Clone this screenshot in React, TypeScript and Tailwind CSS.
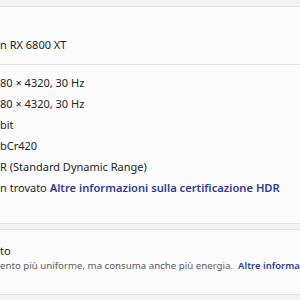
import React from "react";

// Pagina "Display avanzato" — ritaglio delle informazioni sullo schermo.
//   Solo la porzione visibile dei testi: le etichette a sinistra restano fuori inquadratura.
const rows = [
  "80 × 4320, 30 Hz",
  "80 × 4320, 30 Hz",
  "bit",
  "bCr420",
  "R (Standard Dynamic Range)",
];

export default function App() {
  return (
    <div className="h-[300px] w-[300px] overflow-hidden bg-[#f3f3f3] pt-[6px] font-['Noto_Sans',sans-serif] text-[#1b1b1b]">
      <div className="border-y border-[#e3e3e3] bg-[#fbfbfb]">
        <div className="flex h-[57px] items-end pb-[11px]">
          <p className="whitespace-nowrap text-[11px] leading-[16px] text-[#1b1b1b]">n RX 6800 XT</p>
        </div>
        <div className="border-t border-[#e3e3e3] pb-[25px] pt-[7px]">
          <div className="flex flex-col text-[11px] text-[#262626]">
            {rows.map((r, i) => (
              <p key={i} className="whitespace-nowrap leading-[21px]">
                {r}
              </p>
            ))}
            <p className="whitespace-nowrap leading-[21px]">
              n trovato{" "}
              <a className="text-[11.2px] font-semibold text-[#2f3d8c]">
                Altre informazioni sulla certificazione HDR
              </a>
            </p>
          </div>
        </div>
      </div>

      <div className="mt-[5px] border-y border-[#e3e3e3] bg-[#fbfbfb] pb-[21px] pt-[13px]">
        <p className="text-[11px] leading-[16px] text-[#1b1b1b]">to</p>
        <p className="whitespace-nowrap text-[9.7px] leading-[14px] text-[#5d5d5d]">
          ento più uniforme, ma consuma anche più energia.
          <a className="ml-[5px] text-[9.5px] font-semibold text-[#2f3d8c]">Altre informa</a>
        </p>
      </div>
    </div>
  );
}
